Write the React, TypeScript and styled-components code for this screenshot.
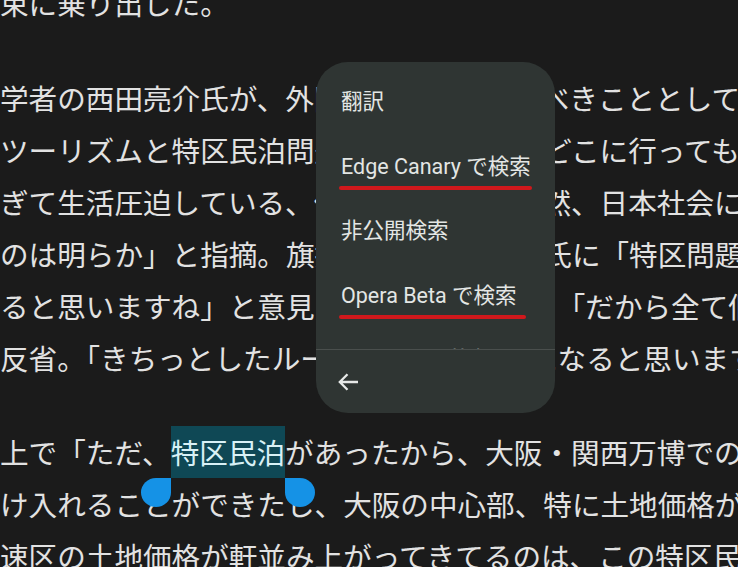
import React from "react";
import styled, { createGlobalStyle } from "styled-components";

const Global = createGlobalStyle`
  html, body {
    margin: 0;
    padding: 0;
    background: #1b1b1b;
    overflow: hidden;
  }
`;

const Page = styled.main`
  position: relative;
  width: 738px;
  height: 567px;
  overflow: hidden;
  background: #1b1b1b;
  color: #e2e2e2;
  font-family: "Noto Sans CJK JP", "Noto Sans", sans-serif;
`;

const Article = styled.article`
  display: flex;
  flex-direction: column;
  gap: 42.5px;
  margin-top: -23px;
`;

const Paragraph = styled.p`
  margin: 0;
  font-size: 28.6px;
  line-height: 52px;
  white-space: nowrap;
`;

const Line = styled.span`
  display: block;
`;

const Selected = styled.span`
  position: relative;
  display: inline-block;
  background: #0f4855;
  color: #d8f1f6;
`;

const Handle = styled.span<{ $side: "start" | "end" }>`
  position: absolute;
  top: 100%;
  width: 30px;
  height: 29px;
  background: #1592e6;
  ${(p) =>
    p.$side === "start"
      ? "right: 100%; border-radius: 50% 0 50% 50%;"
      : "left: 100%; border-radius: 0 50% 50% 50%;"}
`;

const Menu = styled.div`
  position: absolute;
  left: 316px;
  top: 62px;
  width: 239px;
  height: 351px;
  background: #2f3533;
  border-radius: 32px;
  overflow: hidden;
  display: flex;
  flex-direction: column;
  color: #e3e6e4;
  font-family: Roboto, "Noto Sans CJK JP", sans-serif;
  font-size: 21.5px;
`;

const Items = styled.ul`
  list-style: none;
  margin: 0;
  padding: 8px 0 0;
  height: 287px;
  box-sizing: border-box;
  overflow: hidden;
  flex: none;
`;

const Item = styled.li`
  height: 64.5px;
  display: flex;
  align-items: center;
  padding-left: 25px;
  white-space: nowrap;
`;

const Label = styled.span<{ $mark?: boolean; $extend?: number }>`
  position: relative;
  display: inline-block;
  line-height: 26px;
  ${(p) =>
    p.$mark
      ? `&::after {
          content: "";
          position: absolute;
          left: -2px;
          right: ${-(p.$extend ?? 0)}px;
          top: calc(50% + 19.5px);
          height: 4px;
          border-radius: 2px;
          background: #d0181c;
        }`
      : ""}
`;

const Divider = styled.hr`
  margin: 0;
  border: 0;
  height: 1px;
  background: #4a4f4d;
  flex: none;
`;

const Footer = styled.div`
  flex: 1;
  display: flex;
  align-items: center;
  padding-left: 21px;
`;

const BackButton = styled.button`
  display: flex;
  align-items: center;
  justify-content: center;
  padding: 0;
  border: 0;
  background: transparent;
  color: #e6e8e7;
  cursor: pointer;
`;

const BackArrow = () => (
  <svg width="22" height="20" viewBox="0 0 22 20" fill="none">
    <path
      d="M21 10H2.8M10.5 2.2L2.8 10l7.7 7.8"
      stroke="currentColor"
      strokeWidth="2.3"
    />
  </svg>
);

export default function App() {
  return (
    <>
      <Global />
      <Page>
        <Article>
          <Paragraph>
            <Line>束に乗り出した。</Line>
          </Paragraph>
          <Paragraph>
            <Line>学者の西田亮介氏が、外国人観光客に対すべきこととして、</Line>
            <Line>ツーリズムと特区民泊問題を挙げ日本中のどこに行っても</Line>
            <Line>ぎて生活圧迫している、住民らの反発も当然、日本社会に</Line>
            <Line>のは明らか」と指摘。旗振り役の吉村洋文氏に「特区問題</Line>
            <Line>ると思いますね」と意見し、さらに続けて。「だから全て個</Line>
            <Line>反省。「きちっとしたルールを作れば健全になると思います</Line>
          </Paragraph>
          <Paragraph>
            <Line>
              上で「ただ、
              <Selected>
                特区民泊
                <Handle $side="start" />
                <Handle $side="end" />
              </Selected>
              があったから、大阪・関西万博での
            </Line>
            <Line>け入れることができたし、大阪の中心部、特に土地価格が</Line>
            <Line>速区の土地価格が軒並み上がってきてるのは、この特区民</Line>
          </Paragraph>
        </Article>

        <Menu>
          <Items>
            <Item>
              <Label>翻訳</Label>
            </Item>
            <Item>
              <Label $mark $extend={1}>
                Edge Canary で検索
              </Label>
            </Item>
            <Item>
              <Label>非公開検索</Label>
            </Item>
            <Item>
              <Label $mark $extend={9}>
                Opera Beta で検索
              </Label>
            </Item>
            <Item>
              <Label>テキストを共有</Label>
            </Item>
          </Items>
          <Divider />
          <Footer>
            <BackButton aria-label="戻る">
              <BackArrow />
            </BackButton>
          </Footer>
        </Menu>
      </Page>
    </>
  );
}
